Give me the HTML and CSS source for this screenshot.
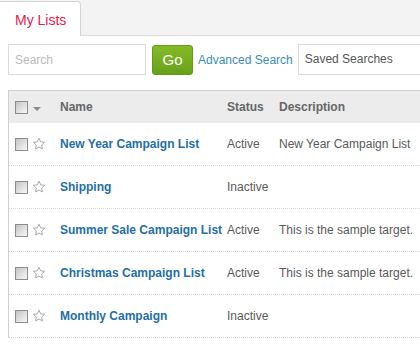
FILE: index.html
```html
<!DOCTYPE html>
<html lang="en">
<head>
    <meta charset="UTF-8">
    <title>My Lists</title>
    <link rel="stylesheet" href="styles.css">
</head>
<body>
    <div class="tabbar">
        <div class="tab">My Lists</div>
    </div>

    <div class="toolbar">
        <input type="text" class="search" placeholder="Search">
        <button type="button" class="go">Go</button>
        <a href="#" class="advanced">Advanced Search</a>
        <div class="saved">Saved Searches</div>
    </div>

    <div class="list">
        <div class="row head">
            <div class="tools">
                <span class="check"></span>
                <span class="caret"></span>
            </div>
            <div>Name</div>
            <div>Status</div>
            <div>Description</div>
        </div>
        <div class="row">
            <div class="tools">
                <span class="check"></span>
                <svg class="star" width="14" height="14" viewBox="0 0 14 14"><path d="M7 1.2l1.7 3.6 3.9.5-2.9 2.7.7 3.9L7 10l-3.4 1.9.7-3.9L1.4 5.3l3.9-.5z"/></svg>
            </div>
            <div><a href="#" class="name">New Year Campaign List</a></div>
            <div>Active</div>
            <div>New Year Campaign List</div>
        </div>
        <div class="row">
            <div class="tools">
                <span class="check"></span>
                <svg class="star" width="14" height="14" viewBox="0 0 14 14"><path d="M7 1.2l1.7 3.6 3.9.5-2.9 2.7.7 3.9L7 10l-3.4 1.9.7-3.9L1.4 5.3l3.9-.5z"/></svg>
            </div>
            <div><a href="#" class="name">Shipping</a></div>
            <div>Inactive</div>
            <div></div>
        </div>
        <div class="row">
            <div class="tools">
                <span class="check"></span>
                <svg class="star" width="14" height="14" viewBox="0 0 14 14"><path d="M7 1.2l1.7 3.6 3.9.5-2.9 2.7.7 3.9L7 10l-3.4 1.9.7-3.9L1.4 5.3l3.9-.5z"/></svg>
            </div>
            <div><a href="#" class="name">Summer Sale Campaign List</a></div>
            <div>Active</div>
            <div>This is the sample target.</div>
        </div>
        <div class="row">
            <div class="tools">
                <span class="check"></span>
                <svg class="star" width="14" height="14" viewBox="0 0 14 14"><path d="M7 1.2l1.7 3.6 3.9.5-2.9 2.7.7 3.9L7 10l-3.4 1.9.7-3.9L1.4 5.3l3.9-.5z"/></svg>
            </div>
            <div><a href="#" class="name">Christmas Campaign List</a></div>
            <div>Active</div>
            <div>This is the sample target.</div>
        </div>
        <div class="row">
            <div class="tools">
                <span class="check"></span>
                <svg class="star" width="14" height="14" viewBox="0 0 14 14"><path d="M7 1.2l1.7 3.6 3.9.5-2.9 2.7.7 3.9L7 10l-3.4 1.9.7-3.9L1.4 5.3l3.9-.5z"/></svg>
            </div>
            <div><a href="#" class="name">Monthly Campaign</a></div>
            <div>Inactive</div>
            <div></div>
        </div>
    </div>
</body>
</html>
```

FILE: styles.css
```css
body {
    margin: 0;
    font-family: "Liberation Sans", Arial, sans-serif;
    font-size: 12px;
    color: #5a5a5a;
    background-color: #fff;
    overflow: hidden;
}

.tabbar {
    height: 35px;
    background-color: #f3f3f3;
    border-bottom: 1px solid #dcdcdc;
    display: flex;
    align-items: flex-end;
}

.tab {
    width: 65px;
    height: 34px;
    margin-bottom: -1px;
    padding-left: 15px;
    background-color: #fff;
    border: 1px solid #d4d4d4;
    border-left: none;
    border-bottom: none;
    border-radius: 0 4px 0 0;
    color: #e8184c;
    font-size: 14px;
    line-height: 36px;
}

.toolbar {
    display: flex;
    align-items: center;
    padding: 8px 0 0 8px;
    height: 31px;
    overflow: hidden;
}

.toolbar > * {
    flex-shrink: 0;
}

.search {
    box-sizing: border-box;
    width: 138px;
    height: 31px;
    padding: 0 6px;
    border: 1px solid #dadada;
    font-family: inherit;
    font-size: 12px;
    outline: none;
}

.search::placeholder {
    color: #bbb;
}

.go {
    box-sizing: border-box;
    width: 41px;
    height: 30px;
    margin-left: 6px;
    padding: 0;
    border: 1px solid #639a17;
    border-radius: 3px;
    background: linear-gradient(#85bb26, #68a11a);
    color: #fff;
    font-family: inherit;
    font-size: 15px;
}

.advanced {
    margin-left: 5px;
    color: #3b8db4;
    text-decoration: none;
    white-space: nowrap;
}

.saved {
    box-sizing: border-box;
    width: 130px;
    height: 31px;
    margin-left: 5px;
    padding-left: 6px;
    border: 1px solid #dadada;
    border-right: none;
    line-height: 29px;
    color: #555;
    white-space: nowrap;
}

.list {
    margin: 15px 0 0 8px;
    border-left: 1px solid #cfcfcf;
    border-top: 1px solid #cfcfcf;
}

.row {
    display: grid;
    grid-template-columns: 51px 167px 52px 1fr;
    align-items: center;
    height: 42px;
    border-bottom: 1px dotted #d8d8d8;
    white-space: nowrap;
}

.row.head {
    height: 32px;
    background-color: #ececec;
    border-bottom: none;
    color: #666;
    font-weight: bold;
}

.tools {
    display: flex;
    align-items: center;
    padding-left: 6px;
}

.check {
    box-sizing: border-box;
    width: 13px;
    height: 13px;
    border: 1px solid #8c8c8c;
    background: linear-gradient(135deg, #c4c4c4, #f8f8f8);
}

.caret {
    margin-left: 5px;
    margin-top: 3px;
    border-left: 4px solid transparent;
    border-right: 4px solid transparent;
    border-top: 4px solid #8a8a8a;
}

.star {
    margin-left: 4px;
    fill: #fff;
    stroke: #a8a8a8;
    stroke-width: 1;
}

.name {
    color: #1f6fa6;
    font-weight: bold;
    text-decoration: none;
}
```
